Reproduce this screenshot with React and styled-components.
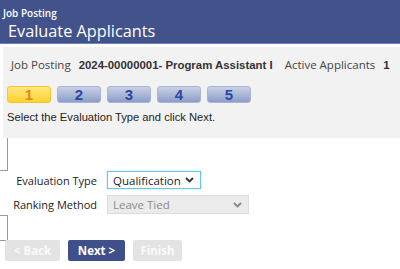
import React from "react";
import styled, { createGlobalStyle } from "styled-components";

const GlobalStyle = createGlobalStyle`
  body {
    margin: 0;
    background: #fff;
    font-family: "Open Sans", "Liberation Sans", sans-serif;
  }
`;

const Page = styled.div`
  width: 400px;
  height: 269px;
  overflow: hidden;
`;

const Header = styled.div`
  background-color: #42528a;
  height: 44px;
  border-bottom: 1px solid #7083bd;
  padding: 6px 0 0 3px;
  box-sizing: border-box;
  color: #fff;
`;

const SubTitle = styled.div`
  font-size: 10px;
  font-weight: 600;
  line-height: 14px;
`;

const Title = styled.div`
  font-size: 16.3px;
  line-height: 22px;
  margin-left: 5px;
`;

const Panel = styled.div`
  background-color: #f2f2f2;
  margin: 3px 0 0 3px;
  padding: 10px 0 0 8px;
  height: 91px;
  box-sizing: border-box;
`;

const InfoRow = styled.div`
  display: flex;
  align-items: baseline;
  font-size: 11.5px;
  color: #444;
  line-height: 16px;
`;

const Value = styled.span`
  font-family: "Liberation Sans", Arial, sans-serif;
  font-weight: bold;
  font-size: 11.4px;
  color: #333;
  margin: 0 ${(p) => p.$gap || 0}px 0 8px;
`;

const Steps = styled.div`
  display: flex;
  gap: 6px;
  margin: 13px 0 0 -4px;
`;

const Step = styled.div`
  width: 44px;
  height: 17px;
  border-radius: 3px;
  display: flex;
  align-items: center;
  justify-content: center;
  font-family: "Liberation Sans", Arial, sans-serif;
  font-weight: bold;
  font-size: 15px;
  box-sizing: border-box;
  background: ${(p) =>
    p.$active
      ? "linear-gradient(#ffe680, #ffd22e)"
      : "linear-gradient(#c9d1e6, #8e9dc9)"};
  border: 1px solid ${(p) => (p.$active ? "#f5c52a" : "#a9b4d6")};
  color: ${(p) => (p.$active ? "#e3861a" : "#2a47a3")};
`;

const Hint = styled.div`
  font-family: "Liberation Sans", Arial, sans-serif;
  font-size: 11.2px;
  color: #222;
  margin: 8px 0 0 -4px;
`;

const Stub = styled.div`
  width: 7px;
  height: ${(p) => p.$h}px;
  border-right: 1px solid #999;
  border-bottom: 1px solid #999;
  border-top: ${(p) => (p.$top ? "1px solid #999" : "none")};
`;

const Form = styled.div`
  display: grid;
  grid-template-columns: 97px auto;
  column-gap: 10px;
  row-gap: 6px;
  align-items: center;
  margin: 0 0 1px 0;
`;

const Label = styled.div`
  text-align: right;
  font-size: 11px;
  color: #222;
`;

const Select = styled.div`
  display: flex;
  align-items: center;
  justify-content: space-between;
  box-sizing: border-box;
  height: ${(p) => (p.$disabled ? 19 : 18)}px;
  width: ${(p) => p.$w}px;
  padding: 0 6px 0 5px;
  font-size: 11.5px;
  color: ${(p) => (p.$disabled ? "#8a8a8a" : "#222")};
  background: ${(p) => (p.$disabled ? "#ebebeb" : "#fff")};
  border: 1px solid ${(p) => (p.$disabled ? "#dcdcdc" : "#6cc7ea")};
  box-shadow: ${(p) => (p.$disabled ? "none" : "0 0 2px #9fe0f5")};
`;

const Buttons = styled.div`
  display: flex;
  gap: 8px;
  margin: -1px 0 0 5px;
`;

const Button = styled.div`
  height: 21px;
  width: ${(p) => p.$w}px;
  display: flex;
  align-items: center;
  justify-content: center;
  border-radius: 2px;
  font-family: "Open Sans", sans-serif;
  font-weight: bold;
  font-size: 11.5px;
  background: ${(p) => (p.$primary ? "#3f4f8a" : "#e3e3e3")};
  color: ${(p) => (p.$primary ? "#fff" : "#fafafa")};
`;

const Chevron = ({ color }) => (
  <svg width="9" height="6" viewBox="0 0 9 6">
    <path d="M1 1l3.5 3.5L8 1" fill="none" stroke={color} strokeWidth="1.9" />
  </svg>
);

const steps = [1, 2, 3, 4, 5];

export default function App() {
  return (
    <Page>
      <GlobalStyle />
      <Header>
        <SubTitle>Job Posting</SubTitle>
        <Title>Evaluate Applicants</Title>
      </Header>
      <Panel>
        <InfoRow>
          Job Posting
          <Value $gap={12}>2024-00000001- Program Assistant I</Value>
          Active Applicants
          <Value>1</Value>
        </InfoRow>
        <Steps>
          {steps.map((n) => (
            <Step key={n} $active={n === 1}>
              {n}
            </Step>
          ))}
        </Steps>
        <Hint>Select the Evaluation Type and click Next.</Hint>
      </Panel>
      <Stub $h={32} />
      <Form>
        <Label>Evaluation Type</Label>
        <Select $w={94}>
          Qualification
          <Chevron color="#333" />
        </Select>
        <Label>Ranking Method</Label>
        <Select $w={142} $disabled>
          Leave Tied
          <Chevron color="#888" />
        </Select>
      </Form>
      <Stub $h={24} $top />
      <Buttons>
        <Button $w={55}>&lt; Back</Button>
        <Button $w={57} $primary>
          Next &gt;
        </Button>
        <Button $w={49}>Finish</Button>
      </Buttons>
    </Page>
  );
}
